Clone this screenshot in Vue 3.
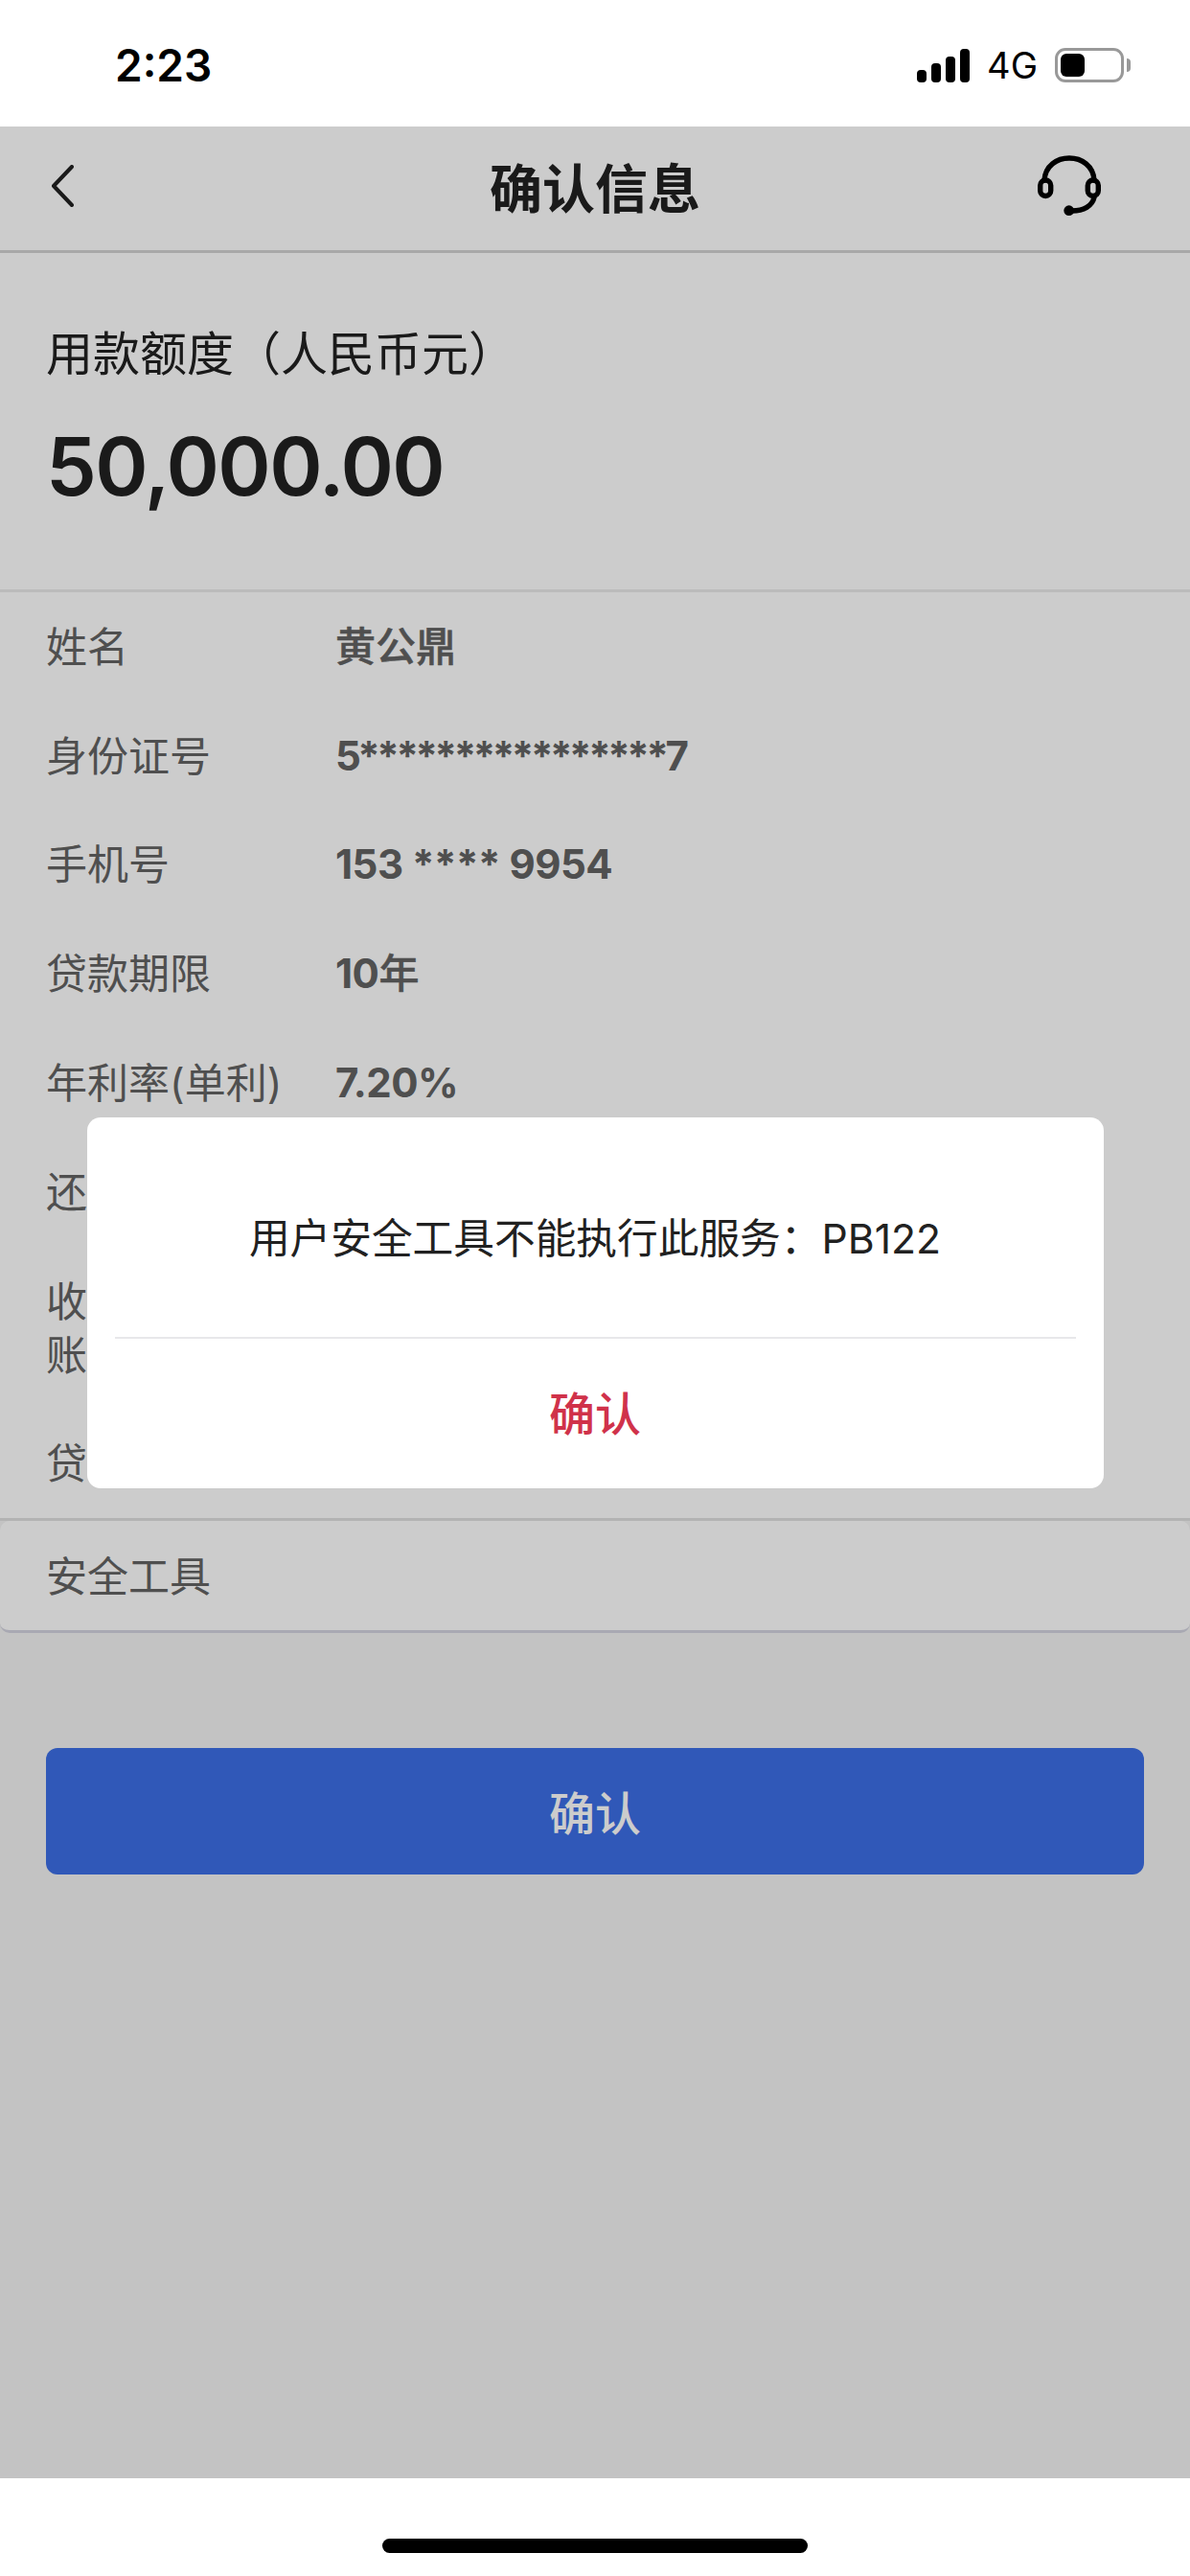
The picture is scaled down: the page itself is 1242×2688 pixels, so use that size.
<template>
  <div class="screen">
    <header class="status">
      <span class="status__time">2:23</span>
      <div class="status__right">
        <div class="signal">
          <i v-for="h in signalBars" :key="h" :style="{ height: h + 'px' }"></i>
        </div>
        <span class="status__net">4G</span>
        <div class="battery">
          <div class="battery__body"><div class="battery__fill"></div></div>
          <div class="battery__nub"></div>
        </div>
      </div>
    </header>

    <main class="page">
      <nav class="nav">
        <svg class="nav__back" width="24" height="44" viewBox="0 0 24 44" fill="none">
          <path d="M22 2 3 22l19 20" stroke="#212121" stroke-width="4" stroke-linecap="round" stroke-linejoin="round" />
        </svg>
        <h1 class="nav__title">确认信息</h1>
        <svg class="nav__service" width="66" height="64" viewBox="0 0 66 64" fill="none" stroke="#000" stroke-width="5.4" stroke-linecap="round">
          <path d="M7 26C8 11 20 3 33 3s25 8 26 23" />
          <rect x="2.7" y="26" width="11" height="16.5" rx="5.5" />
          <rect x="52.3" y="26" width="11" height="16.5" rx="5.5" />
          <path d="M59 44c-2 9-11 14-23 14" />
          <circle cx="32.7" cy="57.7" r="5.4" fill="#000" stroke="none" />
        </svg>
      </nav>

      <section class="amount">
        <div class="amount__label">用款额度（人民币元）</div>
        <div class="amount__value">50,000.00</div>
      </section>

      <section class="info">
        <div v-for="row in rows" :key="row.label" class="info__row">
          <div class="info__label" v-html="row.label"></div>
          <div class="info__value">
            <b :class="{ 'info__masked': row.masked }">{{ row.num }}</b>{{ row.text }}
          </div>
        </div>
      </section>

      <section class="tool">安全工具</section>

      <button class="submit">确认</button>

      <div class="scrim">
        <div class="dialog">
          <div class="dialog__msg">用户安全工具不能执行此服务：PB122</div>
          <div class="dialog__action">确认</div>
        </div>
      </div>
    </main>

    <footer class="home"><div class="home__bar"></div></footer>
  </div>
</template>

<script setup>
const signalBars = [13, 20, 27, 35]

const rows = [
  { label: '姓名', text: '黄公鼎' },
  { label: '身份证号', num: '5****************7', masked: true },
  { label: '手机号', num: '153 **** 9954' },
  { label: '贷款期限', num: '10', text: '年' },
  { label: '年利率(单利)', num: '7.20%' },
  { label: '还款方式' },
  { label: '收款<br>账户' },
  { label: '贷款用途' }
]
</script>

<style>
html,
body {
  margin: 0;
  background: #fff;
}
</style>

<style scoped>
.screen {
  width: 1242px;
  height: 2688px;
  display: flex;
  flex-direction: column;
  font-family: Inter, "Noto Sans CJK SC", sans-serif;
  background: #fff;
  overflow: hidden;
}

.status {
  height: 132px;
  flex: none;
  display: flex;
  align-items: center;
  justify-content: space-between;
  padding: 4px 62px 0 120px;
  box-sizing: border-box;
  color: #000;
}

.status__time {
  font-size: 46px;
  font-weight: 600;
}

.status__right {
  display: flex;
  align-items: center;
}

.signal {
  display: flex;
  align-items: flex-end;
  gap: 5px;
  height: 35px;
}

.signal i {
  width: 10px;
  border-radius: 4px;
  background: #000;
}

.status__net {
  font-size: 38px;
  margin: 0 18px 0 18px;
}

.battery {
  display: flex;
  align-items: center;
  gap: 3px;
}

.battery__body {
  width: 72px;
  height: 36px;
  box-sizing: border-box;
  padding: 3px;
  border: 3px solid #999;
  border-radius: 11px;
}

.battery__fill {
  width: 25px;
  height: 100%;
  border-radius: 6px;
  background: #000;
}

.battery__nub {
  width: 4px;
  height: 14px;
  border-radius: 0 4px 4px 0;
  background: #999;
}

.page {
  position: relative;
  flex: 1;
  min-height: 0;
  background: #f4f4f4;
}

.nav {
  height: 132px;
  box-sizing: border-box;
  display: grid;
  grid-template-columns: 1fr auto 1fr;
  align-items: center;
  padding: 0 53px 6px;
  background: #fff;
  border-bottom: 3px solid #d3d3d3;
}

.nav__back {
  justify-self: start;
}

.nav__service {
  justify-self: end;
  margin-right: 40px;
}

.nav__title {
  margin: 0 0 2px;
  font-size: 55px;
  font-weight: 700;
  color: #212121;
}

.amount {
  height: 354px;
  box-sizing: border-box;
  padding: 72px 48px 0;
  background: #fff;
  border-bottom: 3px solid #eaeaea;
  color: #212121;
}

.amount__label {
  font-size: 49px;
  line-height: 68px;
}

.amount__value {
  margin-top: 33px;
  font-size: 84px;
  line-height: 100px;
  font-weight: 600;
  letter-spacing: -1.6px;
}

.info {
  background: #fff;
  border-bottom: 3px solid #e0e0e0;
}

.info__row {
  display: flex;
  align-items: center;
  height: 113.75px;
  box-sizing: border-box;
  padding: 0 48px;
  font-size: 43px;
  line-height: 56px;
  color: #636363;
}

.info__row:nth-child(7) {
  height: 170px;
}

.info__label {
  width: 302px;
  flex: none;
}

.info__value {
  font-size: 42px;
  font-weight: 500;
  -webkit-text-stroke: 0.5px #636363;
}

.info__value b {
  font-weight: 700;
  letter-spacing: -0.5px;
  -webkit-text-stroke: 0;
}

.info__value .info__masked {
  letter-spacing: -3.4px;
}

.tool {
  height: 117px;
  box-sizing: border-box;
  padding: 0 0 5px 48px;
  display: flex;
  align-items: center;
  font-size: 43px;
  color: #636363;
  background: #fff;
  border-radius: 10px;
  border-bottom: 3px solid #d4d4e0;
}

.submit {
  display: block;
  width: 1146px;
  height: 132px;
  margin: 120px 48px 0;
  padding: 0 0 3px;
  border: 0;
  border-radius: 12px;
  font-family: inherit;
  font-size: 48px;
  font-weight: 500;
  color: #fff;
  background: #3c6fe6;
}

.scrim {
  position: absolute;
  inset: 0;
  display: flex;
  align-items: center;
  justify-content: center;
  background: rgba(0, 0, 0, 0.2);
}

.dialog {
  width: 1061px;
  height: 387px;
  box-sizing: border-box;
  display: flex;
  flex-direction: column;
  border-radius: 14px;
  background: #fff;
}

.dialog__msg {
  height: 231px;
  box-sizing: border-box;
  flex: none;
  margin: 0 29px;
  padding-top: 18px;
  display: flex;
  align-items: center;
  justify-content: center;
  font-size: 42.7px;
  color: #212121;
  border-bottom: 2px solid #e8e8ea;
}

.dialog__action {
  flex: 1;
  display: flex;
  align-items: center;
  justify-content: center;
  padding-bottom: 6px;
  font-size: 48px;
  font-weight: 500;
  color: #d0324a;
}

.home {
  height: 102px;
  flex: none;
  display: flex;
  justify-content: center;
  padding-top: 63px;
  box-sizing: border-box;
}

.home__bar {
  width: 444px;
  height: 15px;
  border-radius: 8px;
  background: #000;
}
</style>
